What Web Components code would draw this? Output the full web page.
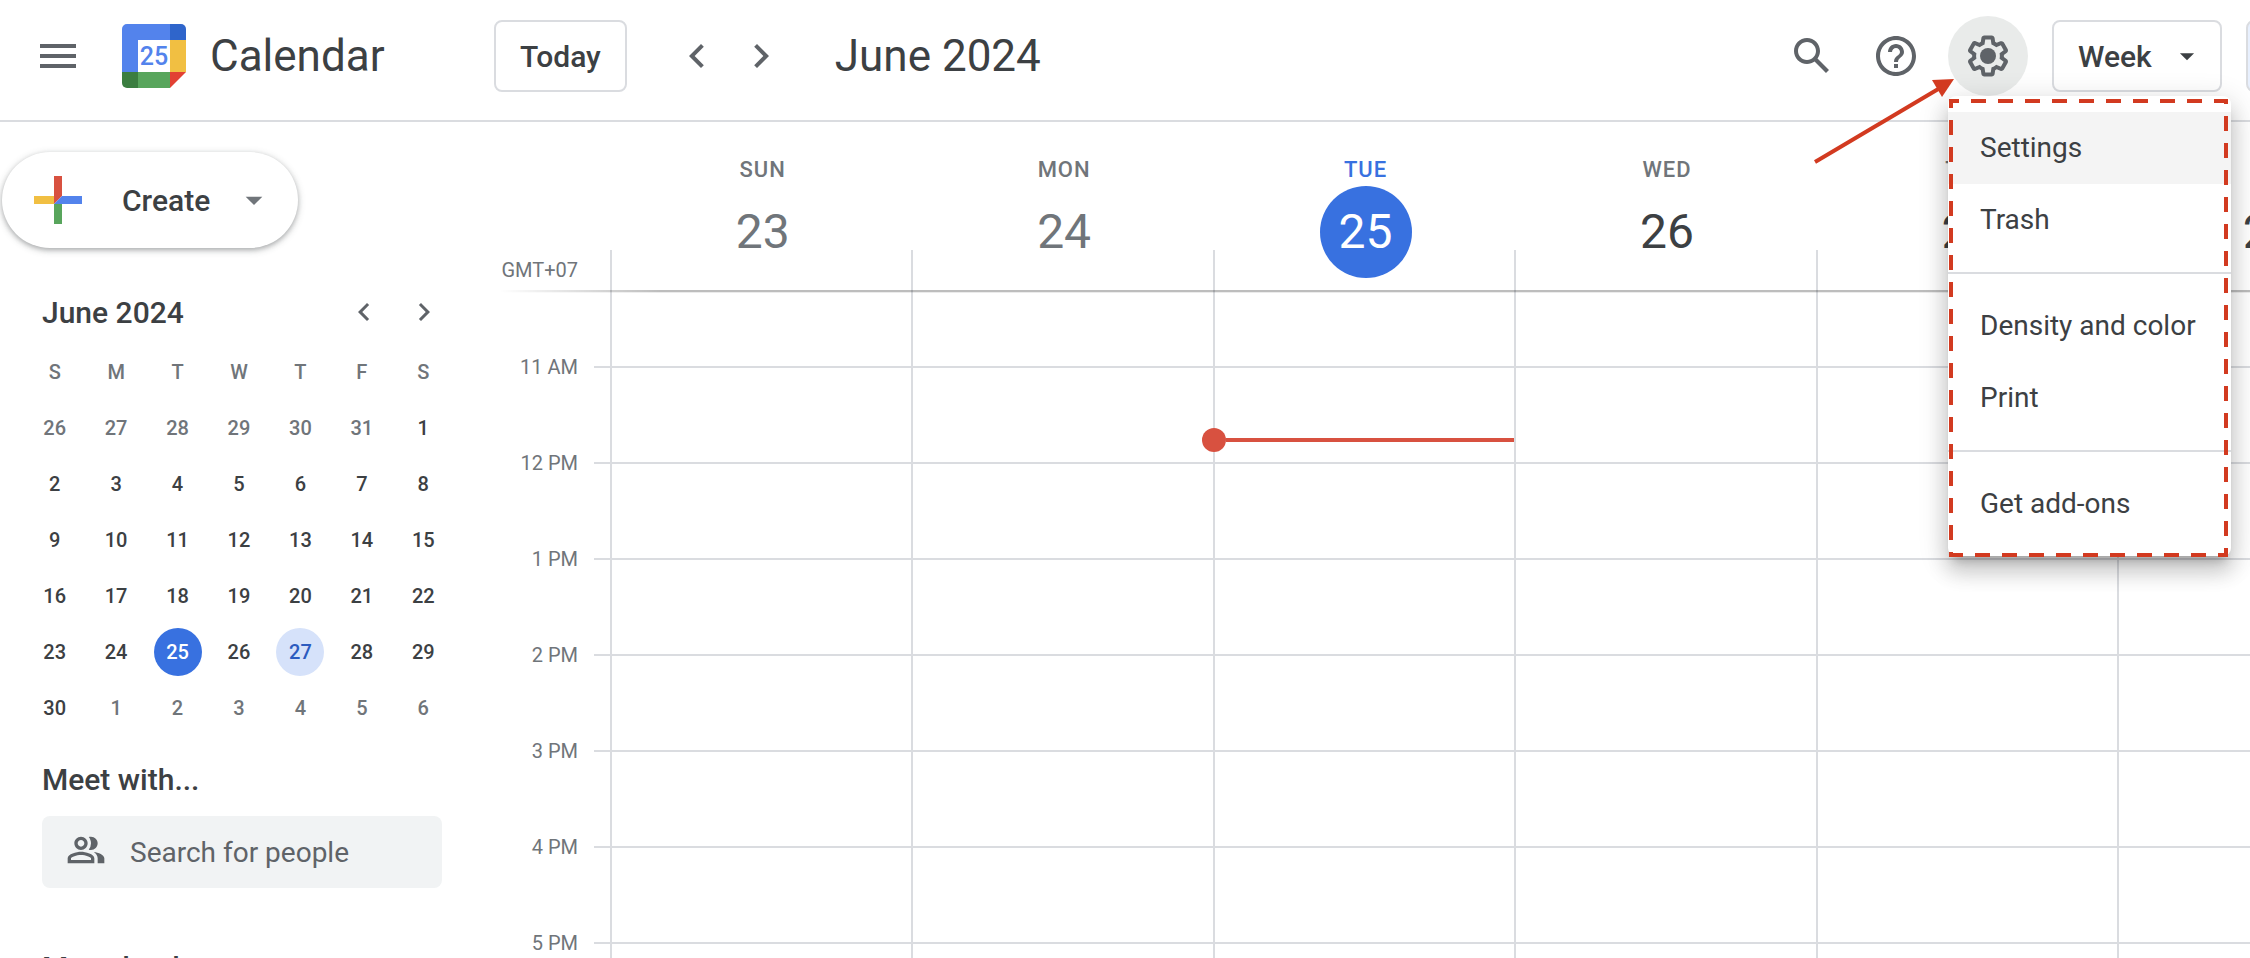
<!DOCTYPE html>
<html lang="en">
<head>
<meta charset="utf-8">
<meta name="viewport" content="width=device-width, initial-scale=1">
<title>Calendar - June 2024</title>
<style>
  :root {
    --text: #3c4043;
    --muted: #70757a;
    --icon: #5f6368;
    --line: #dadce0;
    --blue: #3871e0;
    --red: #d85140;
    --mark: #d23a20;
  }

  body {
    margin: 0;
    height: 100vh;
    overflow: hidden;
    background: #fff;
    color: var(--text);
    font-family: Roboto, "Liberation Sans", sans-serif;
    font-size: 30px;
  }
</style>
</head>
<body>
<calendar-app>
  <app-bar slot="bar" heading="June 2024">
    <settings-menu slot="menu">
      <menu-item active>Settings</menu-item>
      <menu-item>Trash</menu-item>
      <hr>
      <menu-item>Density and color</menu-item>
      <menu-item>Print</menu-item>
      <hr>
      <menu-item>Get add-ons</menu-item>
    </settings-menu>
  </app-bar>
  <create-button slot="side">Create</create-button>
  <mini-calendar slot="side" heading="June 2024"></mini-calendar>
  <people-search slot="side">Meet with...</people-search>
  <side-section slot="side">My calendars</side-section>
  <week-view slot="main" zone="GMT+07"></week-view>
</calendar-app>

<script>
const ICONS = {
  menu: '<path d="M3 18h18v-2H3v2zm0-5h18v-2H3v2zm0-7v2h18V6H3z"/>',
  prev: '<path d="M15.41 7.41 14 6l-6 6 6 6 1.41-1.41L10.83 12z"/>',
  next: '<path d="M10 6 8.59 7.41 13.17 12l-4.58 4.59L10 18l6-6z"/>',
  drop: '<path d="M7 10l5 5 5-5z"/>',
  search: '<path d="M20.49 19l-5.73-5.73C15.53 12.2 16 10.91 16 9.5 16 5.91 13.09 3 9.5 3S3 5.91 3 9.5 5.91 16 9.5 16c1.41 0 2.7-.47 3.77-1.24L19 20.49 20.49 19zM5 9.5C5 7.01 7.01 5 9.5 5S14 7.01 14 9.5 11.99 14 9.5 14 5 11.99 5 9.5z"/>',
  help: '<path d="M11 18h2v-2h-2v2zm1-16C6.48 2 2 6.48 2 12s4.48 10 10 10 10-4.48 10-10S17.52 2 12 2zm0 18c-4.41 0-8-3.59-8-8s3.59-8 8-8 8 3.59 8 8-3.59 8-8 8zm0-14c-2.21 0-4 1.79-4 4h2c0-1.1.9-2 2-2s2 .9 2 2c0 2-3 1.75-3 5h2c0-2.25 3-2.5 3-5 0-2.21-1.79-4-4-4z"/>',
  gear: '<path d="M13.85 22.25h-3.7c-.74 0-1.36-.54-1.45-1.27l-.27-1.89c-.27-.14-.53-.29-.79-.46l-1.8.72c-.7.26-1.47-.03-1.81-.65L2.2 15.53c-.35-.66-.2-1.44.36-1.88l1.53-1.19c-.01-.15-.02-.3-.02-.46 0-.15.01-.31.02-.46l-1.52-1.19c-.59-.45-.74-1.26-.37-1.88l1.85-3.19c.34-.62 1.11-.9 1.79-.63l1.81.73c.26-.17.52-.32.78-.46l.27-1.91c.09-.7.71-1.25 1.44-1.25h3.7c.74 0 1.36.54 1.45 1.27l.27 1.89c.27.14.53.29.79.46l1.8-.72c.71-.26 1.48.03 1.82.65l1.84 3.18c.36.66.2 1.44-.36 1.88l-1.52 1.19c.01.15.02.3.02.46s-.01.31-.02.46l1.52 1.19c.56.45.72 1.23.37 1.86l-1.86 3.22c-.34.62-1.11.9-1.8.63l-1.8-.72c-.26.17-.52.32-.78.46l-.27 1.91c-.1.68-.72 1.22-1.46 1.22zm-3.23-2h2.76l.37-2.55.53-.22c.44-.18.88-.44 1.34-.78l.45-.34 2.38.96 1.38-2.4-2.03-1.58.07-.56c.03-.26.06-.51.06-.78s-.03-.53-.06-.78l-.07-.56 2.03-1.58-1.39-2.4-2.39.96-.45-.35c-.42-.32-.87-.58-1.33-.77l-.52-.22-.37-2.55h-2.76l-.37 2.55-.53.21c-.44.19-.88.44-1.34.79l-.45.33-2.38-.95-1.39 2.39 2.03 1.58-.07.56a7 7 0 0 0-.06.79c0 .26.02.53.06.78l.07.56-2.03 1.58 1.38 2.4 2.39-.96.45.35c.43.33.86.58 1.33.77l.53.22.38 2.55z"/><circle cx="12" cy="12" r="4"/>',
  people: '<path fill-rule="evenodd" d="M15 8c0-1.42-.5-2.73-1.33-3.76.42-.14.86-.24 1.33-.24 2.21 0 4 1.79 4 4s-1.79 4-4 4c-.43 0-.84-.09-1.23-.21-.03-.01-.06-.02-.1-.03A5.98 5.98 0 0 0 15 8zm1.66 5.13C18.03 14.06 19 15.32 19 17v3h4v-3c0-2.18-3.58-3.47-6.34-3.87zM9 6c-1.1 0-2 .9-2 2s.9 2 2 2 2-.9 2-2-.9-2-2-2m0 9c-2.7 0-5.8 1.29-6 2.01V18h12v-1c-.2-.71-3.3-2-6-2M9 4c2.21 0 4 1.79 4 4s-1.79 4-4 4-4-1.79-4-4 1.79-4 4-4zm0 9c2.67 0 8 1.34 8 4v3H1v-3c0-2.66 5.33-4 8-4z"/>',
};

function icon(name, size) {
  return `<svg width="${size}" height="${size}" viewBox="0 0 24 24" fill="currentColor" aria-hidden="true">${ICONS[name]}</svg>`;
}

class BaseElement extends HTMLElement {
  constructor() {
    super();
    this.shadowDOM = this.attachShadow({ mode: "open" });
  }

  connectedCallback() {
    this.render();
  }
}

class CalendarApp extends BaseElement {
  render() {
    this.shadowDOM.innerHTML = `
      <style>
        :host {
          display: flex;
          flex-direction: column;
          height: 100%;
        }

        .body {
          display: flex;
          flex: 1;
          min-height: 0;
        }

        aside {
          flex: 0 0 500px;
          overflow: hidden;
        }

        main {
          flex: 1;
          min-width: 0;
          overflow: hidden;
        }
      </style>
      <slot name="bar"></slot>
      <div class="body">
        <aside><slot name="side"></slot></aside>
        <main><slot name="main"></slot></main>
      </div>
    `;
  }
}

class AppLogo extends BaseElement {
  render() {
    this.shadowDOM.innerHTML = `
      <style>
        :host {
          display: flex;
          align-items: center;
          gap: 24px;
          font-size: 44px;
        }

        text {
          font-size: 25px;
          font-weight: 500;
        }
      </style>
      <svg width="64" height="64" viewBox="0 0 64 64" aria-hidden="true">
        <path d="M48 0H5a5 5 0 0 0-5 5v43h16V16h32z" fill="#5383ec"/>
        <path d="M48 0h11a5 5 0 0 1 5 5v11H48z" fill="#2f65cb"/>
        <path d="M48 16h16v32H48z" fill="#f1bf42"/>
        <path d="M16 48h32v16H16z" fill="#58a55c"/>
        <path d="M0 48h16v16H5a5 5 0 0 1-5-5z" fill="#3b7e40"/>
        <path d="M48 48h16L48 64z" fill="#e24133"/>
        <path d="M16 16h32v32H16z" fill="#fff"/>
        <text x="32" y="41" text-anchor="middle" fill="#5383ec">25</text>
      </svg>
      <span><slot></slot></span>
    `;
  }
}

class IconButton extends BaseElement {
  render() {
    const size = this.getAttribute("size") || 48;
    this.shadowDOM.innerHTML = `
      <style>
        :host {
          display: block;
          --box: 80px;
        }

        :host([small]) {
          --box: 60px;
        }

        button {
          display: flex;
          align-items: center;
          justify-content: center;
          width: var(--box);
          height: var(--box);
          padding: 0;
          border: 0;
          border-radius: 50%;
          background: transparent;
          color: var(--icon);
          cursor: pointer;
        }

        :host([active]) button {
          background: #e9ebea;
        }
      </style>
      <button type="button" aria-label="${this.getAttribute("label")}">${icon(this.getAttribute("icon"), size)}</button>
    `;
  }
}

class AppBar extends BaseElement {
  render() {
    this.shadowDOM.innerHTML = `
      <style>
        :host {
          display: block;
        }

        header {
          display: flex;
          align-items: center;
          height: 112px;
          padding: 0 0 8px 18px;
          border-bottom: 2px solid var(--line);
        }

        .brand {
          display: flex;
          align-items: center;
          gap: 24px;
          flex: 0 0 476px;
        }

        .today {
          height: 72px;
          padding: 0 24px;
          border: 2px solid var(--line);
          border-radius: 8px;
          background: #fff;
          color: inherit;
          font: 500 30px Roboto, sans-serif;
        }

        .nav {
          display: flex;
          gap: 4px;
          margin-left: 40px;
        }

        h1 {
          margin: 0 0 0 44px;
          font-size: 44px;
          font-weight: 400;
          line-height: 56px;
        }

        .tools {
          display: flex;
          align-items: center;
          margin-left: auto;
        }

        .help {
          margin: 0 12px 0 4px;
        }

        .gear {
          position: relative;
          z-index: 2;
        }

        .gear ::slotted(settings-menu) {
          position: absolute;
          top: 80px;
          left: 0;
        }

        .arrow {
          position: absolute;
          top: 60px;
          left: -136px;
        }

        .view {
          display: grid;
          align-items: center;
          margin: 0 24px;
        }

        .view > * {
          grid-area: 1 / 1;
        }

        .view svg {
          justify-self: end;
          margin-right: 18px;
          pointer-events: none;
        }

        select {
          appearance: none;
          width: 170px;
          height: 72px;
          padding: 0 0 0 24px;
          border: 2px solid var(--line);
          border-radius: 8px;
          background: #fff;
          color: inherit;
          font: 500 30px Roboto, sans-serif;
        }

        /* the side panel switch runs past the window edge */
        .panel {
          width: 104px;
          height: 72px;
          margin-right: -100px;
          border: 2px solid var(--line);
          border-radius: 8px;
          background: #e8f0fe;
        }
      </style>
      <header>
        <div class="brand">
          <icon-button icon="menu" label="Main menu"></icon-button>
          <app-logo>Calendar</app-logo>
        </div>
        <button class="today" type="button">Today</button>
        <div class="nav">
          <icon-button small icon="prev" label="Previous week"></icon-button>
          <icon-button small icon="next" label="Next week"></icon-button>
        </div>
        <h1>${this.getAttribute("heading")}</h1>
        <div class="tools">
          <icon-button icon="search" label="Search"></icon-button>
          <icon-button class="help" icon="help" label="Support"></icon-button>
          <div class="gear">
            <icon-button active icon="gear" label="Settings menu"></icon-button>
            <slot name="menu"></slot>
            <svg class="arrow" width="144" height="90" viewBox="0 0 144 90" aria-hidden="true">
              <path d="M3 86 128 12" stroke="#d23a20" stroke-width="4"/>
              <path d="M142 3 120 4 130 21z" fill="#d23a20"/>
            </svg>
          </div>
          <div class="view">
            <select aria-label="View"><option>Week</option></select>
            ${icon("drop", 34)}
          </div>
          <button class="panel" type="button" aria-label="Side panel"></button>
        </div>
      </header>
    `;
  }
}

class SettingsMenu extends BaseElement {
  render() {
    this.shadowDOM.innerHTML = `
      <style>
        :host {
          display: block;
          min-width: 283px;
          padding: 16px 0;
          border-radius: 8px;
          background: #fff;
          box-shadow: 0 10px 10px -6px rgba(0, 0, 0, .2),
            0 16px 20px 2px rgba(0, 0, 0, .14),
            0 6px 28px 4px rgba(0, 0, 0, .12);
        }

        ::slotted(hr) {
          margin: 16px 0;
          border: 0;
          border-top: 2px solid var(--line);
        }

        .outline {
          position: absolute;
          inset: 0;
          width: 100%;
          height: 100%;
          pointer-events: none;
        }

        .outline rect {
          x: 3px;
          y: 5px;
          width: calc(100% - 8px);
          height: calc(100% - 6px);
          fill: none;
          stroke: var(--mark);
          stroke-width: 4px;
          stroke-dasharray: 15 12;
          stroke-dashoffset: 7px;
        }
      </style>
      <slot></slot>
      <svg class="outline" overflow="visible" aria-hidden="true"><rect/></svg>
    `;
  }
}

class MenuItem extends BaseElement {
  render() {
    this.shadowDOM.innerHTML = `
      <style>
        :host {
          display: block;
        }

        button {
          display: block;
          width: 100%;
          height: 72px;
          padding: 0 32px 2px;
          border: 0;
          background: transparent;
          color: inherit;
          font: 400 28px Roboto, sans-serif;
          text-align: left;
          white-space: nowrap;
        }

        :host([active]) button {
          background: #f4f4f4;
        }
      </style>
      <button type="button"><slot></slot></button>
    `;
  }
}

class CreateButton extends BaseElement {
  render() {
    this.shadowDOM.innerHTML = `
      <style>
        :host {
          display: block;
          padding: 30px 0 0 2px;
        }

        button {
          display: flex;
          align-items: center;
          height: 96px;
          width: 296px;
          padding: 0 24px;
          border: 0;
          border-radius: 48px;
          background: #fff;
          color: inherit;
          font: 500 30px Roboto, sans-serif;
          box-shadow: 0 2px 4px rgba(60, 64, 67, .3), 0 2px 6px 2px rgba(60, 64, 67, .15);
        }

        span {
          margin: 0 auto 0 32px;
        }

        .drop {
          display: flex;
          color: var(--muted);
        }
      </style>
      <button type="button">
        <svg width="64" height="64" viewBox="0 0 64 64" aria-hidden="true">
          <path d="M28 8h8v20l-8 8z" fill="#d85140"/>
          <path d="M8 28h20v8H8z" fill="#f1bf42"/>
          <path d="M28 36h8v20h-8z" fill="#58a55c"/>
          <path d="M36 28h20v8H28z" fill="#5383ec"/>
        </svg>
        <span><slot></slot></span>
        <div class="drop">${icon("drop", 40)}</div>
      </button>
    `;
  }
}

class MiniCalendar extends BaseElement {
  // six weeks starting on Sunday, May 26
  weeks() {
    const rows = [];
    for (let w = 0; w < 6; w++) {
      const row = [];
      for (let d = 0; d < 7; d++) {
        const date = new Date(2024, 4, 26 + w * 7 + d);
        const day = date.getDate();
        let cls = date.getMonth() === 5 ? "" : "other";
        if (date.getMonth() === 5 && day === 25) cls = "today";
        if (date.getMonth() === 5 && day === 27) cls = "picked";
        row.push(`<td><span class="${cls}">${day}</span></td>`);
      }
      rows.push(`<tr>${row.join("")}</tr>`);
    }
    return rows.join("");
  }

  render() {
    const heads = ["S", "M", "T", "W", "T", "F", "S"];
    this.shadowDOM.innerHTML = `
      <style>
        :host {
          display: block;
          padding: 34px 46px 0 24px;
        }

        .top {
          display: flex;
          align-items: center;
          padding-left: 18px;
          height: 60px;
        }

        h2 {
          margin: 0 auto 0 0;
          font-size: 30px;
          font-weight: 500;
        }

        table {
          width: 100%;
          margin-top: 2px;
          border-collapse: collapse;
          table-layout: fixed;
          font-size: 20px;
          text-align: center;
        }

        th, td {
          height: 56px;
          padding: 0;
          font-weight: 500;
        }

        th, .other {
          color: var(--muted);
        }

        span {
          display: block;
          width: 48px;
          margin: 0 auto;
          border-radius: 50%;
          line-height: 48px;
        }

        .today {
          background: var(--blue);
          color: #fff;
        }

        .picked {
          background: #d6e2fa;
          color: #2c5bbf;
        }
      </style>
      <div class="top">
        <h2>${this.getAttribute("heading")}</h2>
        <icon-button small size="36" icon="prev" label="Previous month"></icon-button>
        <icon-button small size="36" icon="next" label="Next month"></icon-button>
      </div>
      <table>
        <thead><tr>${heads.map((h) => `<th scope="col">${h}</th>`).join("")}</tr></thead>
        <tbody>${this.weeks()}</tbody>
      </table>
    `;
  }
}

class PeopleSearch extends BaseElement {
  render() {
    this.shadowDOM.innerHTML = `
      <style>
        :host {
          display: block;
          padding: 24px 58px 0 42px;
        }

        label {
          display: block;
          font-weight: 500;
          line-height: 40px;
        }

        .box {
          display: flex;
          align-items: center;
          gap: 24px;
          height: 72px;
          margin-top: 16px;
          padding: 0 24px;
          border-radius: 8px;
          background: #f1f3f4;
          color: var(--icon);
        }

        .box svg {
          flex: none;
          margin-bottom: 4px;
        }

        input {
          flex: 1;
          min-width: 0;
          padding: 0;
          border: 0;
          outline: 0;
          background: transparent;
          color: var(--text);
          font: 400 28px Roboto, sans-serif;
        }

        input::placeholder {
          color: var(--icon);
          opacity: 1;
        }
      </style>
      <label for="people"><slot></slot></label>
      <div class="box">
        ${icon("people", 40)}
        <input id="people" type="text" placeholder="Search for people">
      </div>
    `;
  }
}

class SideSection extends BaseElement {
  render() {
    this.shadowDOM.innerHTML = `
      <style>
        :host {
          display: block;
          padding: 60px 42px 0;
          font-weight: 500;
          line-height: 40px;
        }
      </style>
      <slot></slot>
    `;
  }
}

class WeekView extends BaseElement {
  render() {
    const days = [
      ["SUN", 23, "past"],
      ["MON", 24, "past"],
      ["TUE", 25, "today"],
      ["WED", 26, ""],
      ["THU", 27, ""],
      ["FRI", 28, ""],
      ["SAT", 29, ""],
    ];
    const hours = ["11 AM", "12 PM", "1 PM", "2 PM", "3 PM", "4 PM", "5 PM"];

    this.shadowDOM.innerHTML = `
      <style>
        :host {
          display: block;
          height: 100%;
        }

        .head, .grid {
          display: flex;
        }

        .gutter {
          flex: 0 0 94px;
          box-sizing: border-box;
          padding-right: 16px;
          color: var(--muted);
          font-size: 20px;
          text-align: right;
        }

        .head .gutter {
          align-self: flex-end;
          padding-bottom: 10px;
          line-height: 20px;
        }

        .days {
          display: grid;
          grid-template-columns: repeat(7, 1fr);
          flex: none;
          width: 2110px;
          margin-left: 16px;
        }

        .head .day {
          display: flex;
          flex-direction: column;
          align-items: center;
          height: 168px;
          padding-left: 4px;
          background: linear-gradient(var(--line), var(--line)) left bottom / 2px 40px no-repeat;
          box-sizing: border-box;
        }

        .name {
          margin-top: 37px;
          color: var(--muted);
          font-size: 22px;
          font-weight: 500;
          letter-spacing: 1px;
          line-height: 22px;
        }

        .num {
          width: 92px;
          margin-top: 5px;
          border-radius: 50%;
          font-size: 48px;
          line-height: 92px;
          text-align: center;
        }

        .past .num {
          color: var(--muted);
        }

        .today .name {
          color: var(--blue);
        }

        .today .num {
          background: var(--blue);
          color: #fff;
        }

        .shade {
          position: relative;
          height: 4px;
          margin-bottom: -4px;
          background: linear-gradient(rgba(0, 0, 0, .26) 0 2px, rgba(0, 0, 0, .08) 2px 3px, transparent 3px);
          mask-image: linear-gradient(90deg, transparent, #000 160px);
        }

        .grid .gutter {
          padding-top: 29px;
          line-height: 96px;
        }

        .lines {
          flex: none;
          background: repeating-linear-gradient(transparent 0 94px, var(--line) 94px 96px) 0 -18px;
        }

        .lines .days {
          height: 100%;
        }

        .grid .day {
          border-left: 2px solid var(--line);
        }

        .now {
          display: flex;
          align-items: center;
          margin: 138px 0 0 -13px;
        }

        .now::before {
          content: "";
          width: 24px;
          height: 24px;
          border-radius: 50%;
          background: var(--red);
        }

        .now::after {
          content: "";
          flex: 1;
          height: 4px;
          background: var(--red);
        }
      </style>
      <div class="head">
        <div class="gutter">${this.getAttribute("zone")}</div>
        <div class="days">
          ${days.map(([name, num, cls]) => `
            <div class="day ${cls}">
              <div class="name">${name}</div>
              <div class="num">${num}</div>
            </div>`).join("")}
        </div>
      </div>
      <div class="shade"></div>
      <div class="grid">
        <div class="gutter">${hours.map((h) => `<div>${h}</div>`).join("")}</div>
        <div class="lines">
          <div class="days">
            ${days.map((d) => `<div class="day">${d[2] === "today" ? '<div class="now"></div>' : ""}</div>`).join("")}
          </div>
        </div>
      </div>
    `;
  }
}

customElements.define("icon-button", IconButton);
customElements.define("app-logo", AppLogo);
customElements.define("menu-item", MenuItem);
customElements.define("settings-menu", SettingsMenu);
customElements.define("app-bar", AppBar);
customElements.define("create-button", CreateButton);
customElements.define("mini-calendar", MiniCalendar);
customElements.define("people-search", PeopleSearch);
customElements.define("side-section", SideSection);
customElements.define("week-view", WeekView);
customElements.define("calendar-app", CalendarApp);
</script>
</body>
</html>
